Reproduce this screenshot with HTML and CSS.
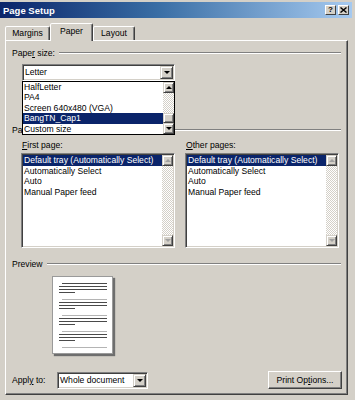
FILE: index.html
```html
<!DOCTYPE html>
<html>
<head>
<meta charset="utf-8">
<title>Page Setup</title>
<link rel="stylesheet" href="styles.css">
</head>
<body>
<div class="window">
  <div class="titlebar">
    <span class="title">Page Setup</span>
    <span class="tbtns">
      <span class="tbtn help">?</span>
      <span class="tbtn close"><svg width="7" height="6" viewBox="0 0 7 6"><path d="M0.5 0.5L6.5 5.5M6.5 0.5L0.5 5.5" stroke="#000" stroke-width="1.4"/></svg></span>
    </span>
  </div>
  <div class="tabs">
    <div class="tab t-margins">Margins</div>
    <div class="tab t-paper active">Paper</div>
    <div class="tab t-layout">Layout</div>
  </div>
  <div class="panel">
    <div class="group"><span class="glabel">Pape<u>r</u> size:</span><i class="rule"></i></div>
    <div class="combo size">
      <div class="combo-text">Letter</div>
      <div class="combo-btn"><b class="arr down"></b></div>
      <div class="popup">
        <div class="items">
          <div class="item">HalfLetter</div>
          <div class="item">PA4</div>
          <div class="item">Screen 640x480 (VGA)</div>
          <div class="item sel">BangTN_Cap1</div>
          <div class="item">Custom size</div>
        </div>
        <div class="sbar">
          <div class="sbtn"><b class="arr up"></b></div>
          <div class="track"><div class="thumb"></div></div>
          <div class="sbtn"><b class="arr down"></b></div>
        </div>
      </div>
    </div>
    <div class="group src"><span class="glabel">Paper source</span><i class="rule"></i></div>
    <div class="cols">
      <div class="col">
        <div class="lbl"><u>F</u>irst page:</div>
        <div class="list">
          <div class="items">
            <div class="item sel">Default tray (Automatically Select)</div>
            <div class="item">Automatically Select</div>
            <div class="item">Auto</div>
            <div class="item">Manual Paper feed</div>
          </div>
          <div class="sbar dis">
            <div class="sbtn"><b class="arr up"></b></div>
            <div class="track"></div>
            <div class="sbtn"><b class="arr down"></b></div>
          </div>
        </div>
      </div>
      <div class="col">
        <div class="lbl"><u>O</u>ther pages:</div>
        <div class="list">
          <div class="items">
            <div class="item sel">Default tray (Automatically Select)</div>
            <div class="item">Automatically Select</div>
            <div class="item">Auto</div>
            <div class="item">Manual Paper feed</div>
          </div>
          <div class="sbar dis">
            <div class="sbtn"><b class="arr up"></b></div>
            <div class="track"></div>
            <div class="sbtn"><b class="arr down"></b></div>
          </div>
        </div>
      </div>
    </div>
    <div class="group prev"><span class="glabel">Preview</span><i class="rule"></i></div>
    <div class="page">
      <svg width="59" height="76" viewBox="0 0 59 76">
        <g fill="#4a4a4a">
          <rect x="9" y="6" width="45" height="1"/>
          <rect x="6" y="9" width="48" height="1"/>
          <rect x="6" y="12" width="48" height="1"/>
          <rect x="6" y="15" width="16" height="1"/>
          <rect x="6" y="25" width="48" height="1"/>
          <rect x="6" y="28" width="48" height="1"/>
          <rect x="6" y="31" width="16" height="1"/>
          <rect x="6" y="41" width="48" height="1"/>
          <rect x="6" y="44" width="48" height="1"/>
          <rect x="6" y="47" width="16" height="1"/>
          <rect x="6" y="57" width="48" height="1"/>
          <rect x="6" y="60" width="48" height="1"/>
          <rect x="6" y="63" width="16" height="1"/>
        </g>
        <g fill="#b4b4b4">
          <rect x="9" y="22" width="45" height="1"/>
          <rect x="9" y="38" width="45" height="1"/>
          <rect x="9" y="54" width="45" height="1"/>
          <rect x="9" y="70" width="45" height="1"/>
        </g>
      </svg>
    </div>
    <div class="bottom">
      <span class="blabel">Appl<u>y</u> to:</span>
      <div class="combo apply">
        <div class="combo-text">Whole document</div>
        <div class="combo-btn"><b class="arr down"></b></div>
      </div>
      <div class="spacer"></div>
      <div class="button">Print Op<u>t</u>ions...</div>
    </div>
  </div>
</div>
</body>
</html>
```

FILE: styles.css
```css
* { box-sizing: border-box; }
html, body { margin: 0; padding: 0; }
body {
  width: 355px;
  height: 400px;
  overflow: hidden;
  background: #d4d0c8;
  font-family: "Liberation Sans", Arial, sans-serif;
  font-size: 8.6px;
  color: #000;
}
u { text-decoration: underline; text-underline-offset: 1px; }

.window { height: 400px; padding: 2px 3px 0 0; }

.titlebar {
  height: 16px;
  background: linear-gradient(to right, #0a246a 0%, #3a6ea5 45%, #a6caf0 100%);
  display: flex;
  align-items: center;
  justify-content: space-between;
  padding: 0 3px 0 3px;
}
.title { color: #fff; font-weight: bold; font-size: 9.5px; }
.tbtns { display: flex; gap: 2px; }
.tbtn {
  width: 11px;
  height: 10px;
  background: #d4d0c8;
  border: 1px solid;
  border-color: #fff #404040 #404040 #fff;
  display: flex;
  align-items: center;
  justify-content: center;
  font-weight: bold;
  font-size: 8px;
  line-height: 8px;
}

.tabs {
  height: 22px;
  display: flex;
  align-items: flex-end;
  padding-left: 5px;
}
.tab {
  height: 14px;
  border: 1px solid;
  border-bottom: none;
  border-color: #fff #404040 transparent #fff;
  border-radius: 2px 2px 0 0;
  box-shadow: inset -1px 0 #808080;
  text-align: center;
  line-height: 13px;
  background: #d4d0c8;
}
.t-margins { width: 45px; }
.t-paper { width: 43px; }
.t-layout { width: 42px; }
.tab.active {
  height: 18px;
  margin-bottom: -1px;
  position: relative;
  z-index: 1;
  line-height: 15px;
}

.panel {
  margin-left: 5px;
  width: 343px;
  height: 355px;
  border: 1px solid;
  border-color: #fff #404040 #404040 #fff;
  box-shadow: inset -1px -1px #808080;
  padding: 7px 6px 0 6px;
}

.group {
  height: 10px;
  display: flex;
  align-items: center;
}
.glabel { padding-right: 4px; white-space: nowrap; }
.rule {
  flex: 1;
  height: 2px;
  border-top: 1px solid #808080;
  border-bottom: 1px solid #fff;
}
.group.src { margin-top: 44px; }
.group.prev { margin-top: 11px; }

.combo {
  position: relative;
  height: 17px;
  background: #fff;
  border: 1px solid;
  border-color: #808080 #fff #fff #808080;
  padding: 1px;
  box-shadow: inset 1px 1px #404040, inset -1px -1px #d4d0c8;
  display: flex;
}
.combo.size { margin: 6px 0 0 10px; width: 153px; }
.combo-text { flex: 1; padding-left: 1px; line-height: 13px; white-space: nowrap; }
.combo-btn {
  width: 13px;
  height: 13px;
  background: #d4d0c8;
  border: 1px solid;
  border-color: #d4d0c8 #404040 #404040 #d4d0c8;
  box-shadow: inset 1px 1px #fff, inset -1px -1px #808080;
  display: flex;
  align-items: center;
  justify-content: center;
}

.arr {
  display: block;
  width: 0;
  height: 0;
  border-left: 3px solid transparent;
  border-right: 3px solid transparent;
}
.arr.down { border-top: 3px solid #000; }
.arr.up { border-bottom: 3px solid #000; }
.dis .arr.down { border-top-color: #a0a0a0; }
.dis .arr.up { border-bottom-color: #a0a0a0; }

.popup {
  position: absolute;
  top: 16px;
  left: -1px;
  width: 153px;
  height: 54px;
  background: #fff;
  border: 1px solid #000;
  display: flex;
  z-index: 5;
}
.popup .item { height: 10.4px; line-height: 10.4px; }
.items { flex: 1; min-width: 0; }
.item {
  height: 10.5px;
  line-height: 10.5px;
  padding-left: 1px;
  white-space: nowrap;
  overflow: hidden;
}
.item.sel { background: #0a246a; color: #fff; }

.sbar {
  width: 11px;
  display: flex;
  flex-direction: column;
}
.sbtn {
  height: 11px;
  flex: none;
  background: #d4d0c8;
  border: 1px solid;
  border-color: #d4d0c8 #404040 #404040 #d4d0c8;
  box-shadow: inset 1px 1px #fff, inset -1px -1px #808080;
  display: flex;
  align-items: center;
  justify-content: center;
}
.track {
  flex: 1;
  display: flex;
  flex-direction: column;
  justify-content: flex-end;
  background-color: #d4d0c8;
  background-image: repeating-conic-gradient(#fff 0 25%, #d4d0c8 0 50%);
  background-size: 2px 2px;
}
.thumb {
  height: 10px;
  background: #d4d0c8;
  border: 1px solid;
  border-color: #d4d0c8 #404040 #404040 #d4d0c8;
  box-shadow: inset 1px 1px #fff, inset -1px -1px #808080;
}

.cols {
  display: flex;
  gap: 10px;
  margin: 5px 0 0 9px;
}
.col { width: 154px; }
.lbl { height: 10px; line-height: 10px; padding-left: 1px; margin-bottom: 3px; }
.list {
  height: 95px;
  background: #fff;
  border: 1px solid;
  border-color: #808080 #fff #fff #808080;
  padding: 1px;
  box-shadow: inset 1px 1px #404040, inset -1px -1px #d4d0c8;
  display: flex;
}

.page {
  margin: 7px 0 0 40px;
  width: 61px;
  height: 78px;
  background: #fff;
  border: 1px solid #9a9a9a;
  box-shadow: 2px 2px 1px #6e6e6e;
}
.page svg { display: block; }

.bottom {
  margin-top: 17px;
  height: 18px;
  display: flex;
  align-items: center;
}
.blabel { width: 45px; white-space: nowrap; }
.combo.apply { width: 91px; }
.spacer { flex: 1; }
.button {
  width: 74px;
  height: 18px;
  margin-right: -1px;
  border: 1px solid;
  border-color: #fff #404040 #404040 #fff;
  box-shadow: inset -1px -1px #808080;
  text-align: center;
  line-height: 16px;
  white-space: nowrap;
}
```
